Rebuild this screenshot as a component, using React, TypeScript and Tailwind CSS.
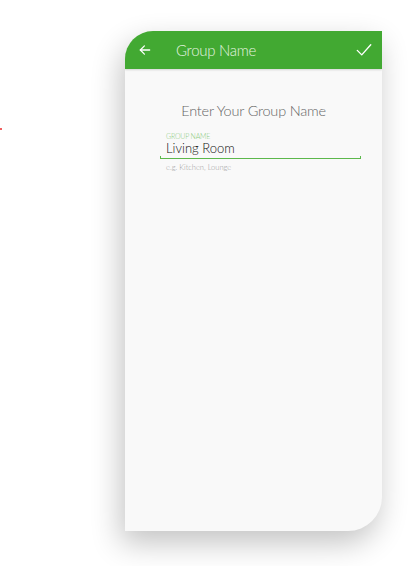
import React from 'react';

const font = { fontFamily: 'Lato, "Open Sans", sans-serif' };

export default function App() {
  return (
    <div className="relative w-[413px] h-[566px] bg-white overflow-hidden pl-[125px] pt-[31px]" style={font}>
      {/* stray red pixel */}
      <div className="absolute left-0 top-[128px] w-[2px] h-[2px] bg-[#f06060]" />

      <div className="w-[257px] h-[500px] flex flex-col bg-[#f9f9f9] rounded-tl-[28px] rounded-br-[34px] overflow-hidden shadow-[-4px_12px_30px_rgba(0,0,0,0.24)]">
        {/* header */}
        <div className="h-[38px] shrink-0 flex items-center bg-[#42a932] pl-[13px] pr-[9px] shadow-[0_1px_2px_rgba(0,0,0,0.15)]">
          <svg width="14" height="14" viewBox="0 0 24 24" fill="none" stroke="#ffffff" strokeWidth="2.2" strokeLinecap="round" strokeLinejoin="round">
            <path d="M20 12H4" />
            <path d="M11 5l-7 7 7 7" />
          </svg>
          <span className="ml-[24px] text-[15px] font-light text-[#e4f3e0] tracking-[-0.3px]">Group Name</span>
          <svg className="ml-auto" width="18" height="18" viewBox="0 0 24 24" fill="none" stroke="#ffffff" strokeWidth="1.8" strokeLinecap="round" strokeLinejoin="round">
            <path d="M3 12.5l6 6L21 5" />
          </svg>
        </div>

        {/* body */}
        <div className="flex flex-col items-center pt-[35px]">
          <div className="text-[14.5px] font-light text-[#666666] leading-none tracking-[-0.2px]">Enter Your Group Name</div>
        </div>
        <div className="mt-[14px] ml-[35px] mr-[21px]">
          <div className="pl-[6px] text-[7px] leading-none font-light text-[#8ccb7e] tracking-[-0.2px]">GROUP NAME</div>
          <div className="pl-[6px] mt-[2px] text-[13px] leading-none font-light text-[#111111]">Living Room</div>
          <div className="mt-[1px] h-[3px] border-x border-b border-[#5cb84c]" />
          <div className="pl-[6px] mt-[5px] text-[7.5px] leading-none font-light text-[#9a9a9a]">e.g. Kitchen, Lounge</div>
        </div>
      </div>
    </div>
  );
}
